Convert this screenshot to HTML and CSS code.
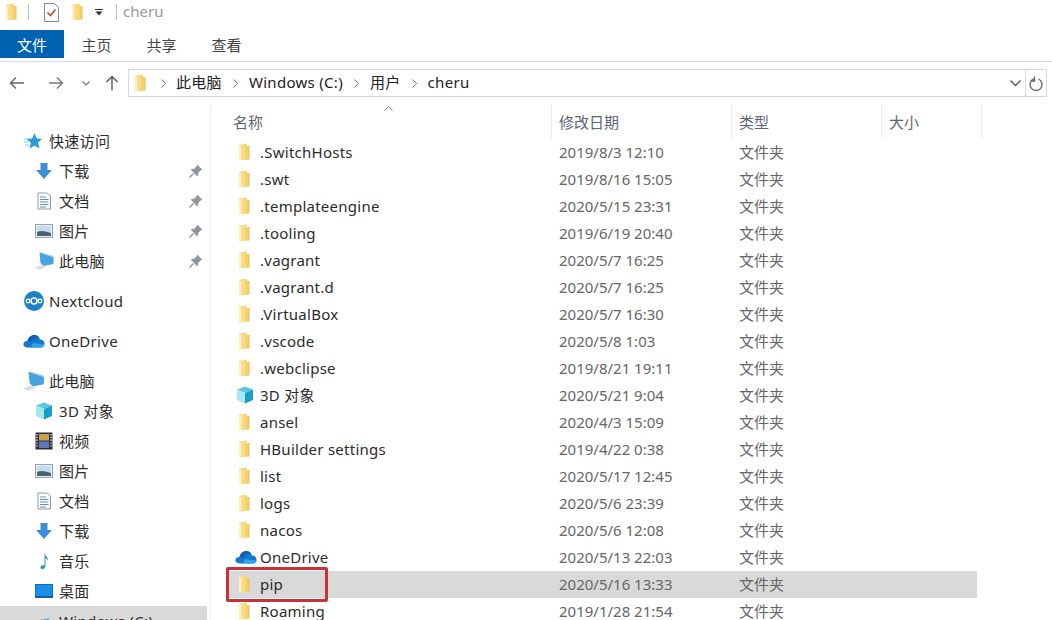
FILE: index.html
```html
<!DOCTYPE html>
<html>

<head>
    <title>cheru</title>
    <link rel="stylesheet" href="styles.css">
</head>

<body>
    <svg class="defs" width="0" height="0">
        <defs>
            <linearGradient id="fold" x1="0" y1="0" x2="1" y2="0">
                <stop offset="0" stop-color="#fbe6a4"/>
                <stop offset="0.6" stop-color="#f8d677"/>
                <stop offset="1" stop-color="#efc25a"/>
            </linearGradient>
            <symbol id="i-folder" viewBox="0 0 12 18">
                <path d="M1 1.5 L8.5 0.5 L9 3 L11.5 3 L11.5 16.5 L1 17.5 Z" fill="url(#fold)"/>
                <path d="M1 3.5 L3 3.5 L3 17.3 L1 17.5 Z" fill="#fff1c4"/>
            </symbol>
            <symbol id="i-down" viewBox="0 0 18 18">
                <path d="M5.5 1 H12.5 V8 H17 L9 17 L1 8 H5.5 Z" fill="#3f8fd8"/>
            </symbol>
            <symbol id="i-doc" viewBox="0 0 18 18">
                <path d="M3 1 H12 L15.5 4 V17 H3 Z" fill="#fff" stroke="#8b99a6"/>
                <path d="M5 5 H11 M5 7.5 H13.5 M5 10 H13.5 M5 12.5 H13.5 M5 15 H11" stroke="#5c8fb0" stroke-width="1"/>
            </symbol>
            <symbol id="i-pic" viewBox="0 0 18 18">
                <rect x="0.5" y="2.5" width="17" height="13" fill="#e8f0f5" stroke="#8fa5b3"/>
                <rect x="2" y="4" width="14" height="10" fill="#c5dcec"/>
                <path d="M2 10 C6 8 10 9 16 11 V14 H2 Z" fill="#4a6272"/>
            </symbol>
            <symbol id="i-pc" viewBox="0 0 20 18">
                <path d="M5 0.5 L19 5 V12 L9 14 L6 11 Z" fill="#4aa3de"/>
                <path d="M5 0.5 L7 0.5 L19 4 V5.5 Z" fill="#9bd2f2"/>
                <path d="M0 15.5 L7 13 L12 15 L5 18 Z" fill="#dcdfe1"/>
            </symbol>
            <symbol id="i-pin" viewBox="0 0 12 12">
                <path d="M7 0.5 L11.5 5 L10 5.5 L8 7.5 L7.8 10 L6.8 10.2 L1.8 5.2 L2 4.2 L4.5 4 L6.5 2 Z" fill="#8f979e"/>
                <path d="M3.8 8.2 L0.5 11.5" stroke="#8f979e" stroke-width="1.2"/>
            </symbol>
            <symbol id="i-cloud" viewBox="0 0 22 14">
                <path d="M5 13.5 C1.5 13.5 0 11.5 0.5 9.5 C1 7.5 3 6.8 4.5 7 C5.5 3 8.5 0.8 11.5 1 C14.5 1.2 16.5 3 17 5.5 C20 5.5 22 8 21.5 10.5 C21 12.5 19.5 13.5 18 13.5 Z" fill="#1577d0"/>
                <path d="M4.5 7 C5.5 3 8.5 0.8 11.5 1 C13.5 1.2 15 2 16 3.5 C12 3.5 9 6 8 8 C7 7.2 5.8 7 4.5 7 Z" fill="#0d5fb8"/>
                <path d="M8 13.5 L18 13.5 C19.5 13.5 21 12.5 21.5 10.5 L10 9 Z" fill="#2ea3ee"/>
            </symbol>
            <symbol id="i-cube" viewBox="0 0 18 18">
                <path d="M9 0.5 L17 3.5 L9 7 L1 3.5 Z" fill="#5cc8e0"/>
                <path d="M1 3.5 L9 7 V17.5 L1 14 Z" fill="#a5e8ee"/>
                <path d="M9 7 L17 3.5 V14 L9 17.5 Z" fill="#1a9cc8"/>
            </symbol>
            <symbol id="i-film" viewBox="0 0 18 18">
                <rect x="0.5" y="0.5" width="17" height="17" fill="#2b2f3a"/>
                <rect x="4" y="2" width="10" height="6.5" fill="#c9a24a"/>
                <rect x="4" y="9.5" width="10" height="6.5" fill="#5f78b8"/>
                <path d="M2 2 V16 M16 2 V16" stroke="#d8dde2" stroke-width="1.4" stroke-dasharray="1.4 1.4"/>
            </symbol>
            <symbol id="i-note" viewBox="0 0 18 18">
                <path d="M9.5 1 C10 4 13.5 5 13 9 C12.5 7.5 11.5 6.5 10.5 6.3 V14 C10.5 16 8.5 17.5 6.8 17 C5 16.5 5 14.5 6.3 13.7 C7.3 13 8.5 13 9.5 13.5 Z" fill="#2b93c9"/>
            </symbol>
            <symbol id="i-desk" viewBox="0 0 18 18">
                <rect x="0.5" y="2.5" width="17" height="13" fill="#1b8fe8" stroke="#0f6cc4"/>
                <rect x="0.5" y="14" width="17" height="1.5" fill="#0f5da8"/>
            </symbol>
            <symbol id="i-win" viewBox="0 0 18 18">
                <path d="M4 8 L8 7 V11 H4 Z M9 7 L14 6 V11 H9 Z M4 12 H8 V16 L4 15 Z M9 12 H14 V17 L9 16 Z" fill="#4fb6e8"/>
            </symbol>
        </defs>
    </svg>

    <div class="titlebar">
        <svg class="tfolder"><use href="#i-folder"/></svg>
        <span class="tsep tsep-a"></span>
        <svg class="tcheck" viewBox="0 0 15 19">
            <path d="M0.5 0.5 H10.5 L14.5 4.5 V18.5 H0.5 Z" fill="#fdfdfd" stroke="#8a8a8a"/>
            <path d="M3.5 9.5 L6.5 12.5 L11.5 6.5" fill="none" stroke="#c8492c" stroke-width="1.6"/>
        </svg>
        <svg class="tfolder tfolder-b"><use href="#i-folder"/></svg>
        <svg class="tdrop" viewBox="0 0 8 7">
            <path d="M0 0.5 H8" stroke="#333"/>
            <path d="M0.5 2.5 H7.5 L4 6.5 Z" fill="#333"/>
        </svg>
        <span class="tsep tsep-b"></span>
        <span class="ttext">cheru</span>
    </div>

    <div class="tabs">
        <span class="tab tab-file">文件</span>
        <span class="tab">主页</span>
        <span class="tab">共享</span>
        <span class="tab">查看</span>
    </div>

    <div class="navrow">
        <div class="navbtns">
            <svg class="nav-arrow back" viewBox="0 0 16 14"><path d="M15 7 H1.5 M7 1.5 L1.5 7 L7 12.5" fill="none" stroke="#666" stroke-width="1.4"/></svg>
            <svg class="nav-arrow fwd" viewBox="0 0 16 14"><path d="M1 7 H14.5 M9 1.5 L14.5 7 L9 12.5" fill="none" stroke="#777" stroke-width="1.4"/></svg>
            <svg class="nav-chev" viewBox="0 0 8 5"><path d="M0.5 0.5 L4 4 L7.5 0.5" fill="none" stroke="#777" stroke-width="1.2"/></svg>
            <svg class="nav-up" viewBox="0 0 14 16"><path d="M7 15.5 V1.5 M1.5 7 L7 1.5 L12.5 7" fill="none" stroke="#555" stroke-width="1.4"/></svg>
        </div>
        <div class="addr">
            <svg class="afolder"><use href="#i-folder"/></svg>
            <svg class="crumb-sep first" viewBox="0 0 5 9"><path d="M0.5 0.5 L4.5 4.5 L0.5 8.5" fill="none" stroke="#777"/></svg>
            <span class="crumb">此电脑</span>
            <svg class="crumb-sep" viewBox="0 0 5 9"><path d="M0.5 0.5 L4.5 4.5 L0.5 8.5" fill="none" stroke="#777"/></svg>
            <span class="crumb">Windows (C:)</span>
            <svg class="crumb-sep" viewBox="0 0 5 9"><path d="M0.5 0.5 L4.5 4.5 L0.5 8.5" fill="none" stroke="#777"/></svg>
            <span class="crumb">用户</span>
            <svg class="crumb-sep" viewBox="0 0 5 9"><path d="M0.5 0.5 L4.5 4.5 L0.5 8.5" fill="none" stroke="#777"/></svg>
            <span class="crumb">cheru</span>
            <svg class="addr-chev" viewBox="0 0 11 7"><path d="M0.5 0.5 L5.5 5.5 L10.5 0.5" fill="none" stroke="#555" stroke-width="1.4"/></svg>
            <span class="addr-refresh">
                <svg viewBox="0 0 14 15"><path d="M5 2.3 A6 6 0 1 0 9.5 2.5 M5.5 0 V4.5 H1.5" fill="none" stroke="#666" stroke-width="1.3" transform="translate(0 0.5)"/></svg>
            </span>
        </div>
    </div>

    <div class="main">
        <div class="side">
            <div class="si top"><svg class="sic" viewBox="0 0 22 22"><path d="M11.5 3 L13.7 8.5 L19 9 L15 12.7 L16.5 18.5 L11.5 15.4 L6.5 18.5 L7.9 12.7 L3.5 9 L9.2 8.5 Z" fill="#2a9bd6"/><path d="M1 9 H5 M1 12 H6 M2 15 H6" stroke="#7fcbed"/></svg>快速访问</div>
            <div class="si sub"><svg class="sic"><use href="#i-down"/></svg>下载<svg class="pin"><use href="#i-pin"/></svg></div>
            <div class="si sub"><svg class="sic"><use href="#i-doc"/></svg>文档<svg class="pin"><use href="#i-pin"/></svg></div>
            <div class="si sub"><svg class="sic"><use href="#i-pic"/></svg>图片<svg class="pin"><use href="#i-pin"/></svg></div>
            <div class="si sub"><svg class="sic sic-pc"><use href="#i-pc"/></svg>此电脑<svg class="pin"><use href="#i-pin"/></svg></div>
            <div class="si top gap"><svg class="sic" viewBox="0 0 22 22"><circle cx="11" cy="11" r="10" fill="#1b82c5"/><circle cx="11" cy="11" r="3" fill="none" stroke="#fff" stroke-width="1.5"/><circle cx="5" cy="11" r="1.8" fill="none" stroke="#fff" stroke-width="1.2"/><circle cx="17" cy="11" r="1.8" fill="none" stroke="#fff" stroke-width="1.2"/></svg>Nextcloud</div>
            <div class="si top gap"><svg class="sic sic-cloud"><use href="#i-cloud"/></svg>OneDrive</div>
            <div class="si top gap"><svg class="sic"><use href="#i-pc"/></svg>此电脑</div>
            <div class="si sub"><svg class="sic"><use href="#i-cube"/></svg>3D 对象</div>
            <div class="si sub"><svg class="sic"><use href="#i-film"/></svg>视频</div>
            <div class="si sub"><svg class="sic"><use href="#i-pic"/></svg>图片</div>
            <div class="si sub"><svg class="sic"><use href="#i-doc"/></svg>文档</div>
            <div class="si sub"><svg class="sic"><use href="#i-down"/></svg>下载</div>
            <div class="si sub"><svg class="sic"><use href="#i-note"/></svg>音乐</div>
            <div class="si sub"><svg class="sic"><use href="#i-desk"/></svg>桌面</div>
            <div class="si sub cur"><svg class="sic"><use href="#i-win"/></svg>Windows (C:)</div>
        </div>

        <div class="list">
            <div class="head">
                <svg class="sort" viewBox="0 0 9 5"><path d="M0.5 4.5 L4.5 0.5 L8.5 4.5" fill="none" stroke="#888"/></svg>
                <span class="hc c-name">名称</span>
                <span class="hc c-date">修改日期</span>
                <span class="hc c-type">类型</span>
                <span class="hc c-size">大小</span>
            </div>
            <div class="rows">
                <div class="row"><span class="nm"><svg class="fi"><use href="#i-folder"/></svg>.SwitchHosts</span><span class="dt">2019/8/3 12:10</span><span class="ty">文件夹</span></div>
                <div class="row"><span class="nm"><svg class="fi"><use href="#i-folder"/></svg>.swt</span><span class="dt">2019/8/16 15:05</span><span class="ty">文件夹</span></div>
                <div class="row"><span class="nm"><svg class="fi"><use href="#i-folder"/></svg>.templateengine</span><span class="dt">2020/5/15 23:31</span><span class="ty">文件夹</span></div>
                <div class="row"><span class="nm"><svg class="fi"><use href="#i-folder"/></svg>.tooling</span><span class="dt">2019/6/19 20:40</span><span class="ty">文件夹</span></div>
                <div class="row"><span class="nm"><svg class="fi"><use href="#i-folder"/></svg>.vagrant</span><span class="dt">2020/5/7 16:25</span><span class="ty">文件夹</span></div>
                <div class="row"><span class="nm"><svg class="fi"><use href="#i-folder"/></svg>.vagrant.d</span><span class="dt">2020/5/7 16:25</span><span class="ty">文件夹</span></div>
                <div class="row"><span class="nm"><svg class="fi"><use href="#i-folder"/></svg>.VirtualBox</span><span class="dt">2020/5/7 16:30</span><span class="ty">文件夹</span></div>
                <div class="row"><span class="nm"><svg class="fi"><use href="#i-folder"/></svg>.vscode</span><span class="dt">2020/5/8 1:03</span><span class="ty">文件夹</span></div>
                <div class="row"><span class="nm"><svg class="fi"><use href="#i-folder"/></svg>.webclipse</span><span class="dt">2019/8/21 19:11</span><span class="ty">文件夹</span></div>
                <div class="row"><span class="nm"><svg class="fi fi-wide"><use href="#i-cube"/></svg>3D 对象</span><span class="dt">2020/5/21 9:04</span><span class="ty">文件夹</span></div>
                <div class="row"><span class="nm"><svg class="fi"><use href="#i-folder"/></svg>ansel</span><span class="dt">2020/4/3 15:09</span><span class="ty">文件夹</span></div>
                <div class="row"><span class="nm"><svg class="fi"><use href="#i-folder"/></svg>HBuilder settings</span><span class="dt">2019/4/22 0:38</span><span class="ty">文件夹</span></div>
                <div class="row"><span class="nm"><svg class="fi"><use href="#i-folder"/></svg>list</span><span class="dt">2020/5/17 12:45</span><span class="ty">文件夹</span></div>
                <div class="row"><span class="nm"><svg class="fi"><use href="#i-folder"/></svg>logs</span><span class="dt">2020/5/6 23:39</span><span class="ty">文件夹</span></div>
                <div class="row"><span class="nm"><svg class="fi"><use href="#i-folder"/></svg>nacos</span><span class="dt">2020/5/6 12:08</span><span class="ty">文件夹</span></div>
                <div class="row"><span class="nm"><svg class="fi fi-cloud"><use href="#i-cloud"/></svg>OneDrive</span><span class="dt">2020/5/13 22:03</span><span class="ty">文件夹</span></div>
                <div class="row sel"><span class="nm"><svg class="fi"><use href="#i-folder"/></svg>pip</span><span class="dt">2020/5/16 13:33</span><span class="ty">文件夹</span><span class="mark"></span></div>
                <div class="row"><span class="nm"><svg class="fi"><use href="#i-folder"/></svg>Roaming</span><span class="dt">2019/1/28 21:54</span><span class="ty">文件夹</span></div>
            </div>
        </div>
    </div>
</body>
</html>
```

FILE: styles.css
```css
html, body {
    margin: 0;
    height: 620px;
    overflow: hidden;
    background: #fff;
}

body {
    font: normal 15px/20px "Noto Sans", "Noto Sans CJK SC", sans-serif;
    color: #2b2b2b;
}

.defs {
    display: block;
    height: 0;
}

/* title bar */
.titlebar {
    display: flex;
    align-items: center;
    height: 24px;
    padding-left: 5px;
}

.tfolder {
    width: 12px;
    height: 18px;
}

.tfolder-b {
    margin-left: 12px;
}

.tsep {
    width: 1px;
    height: 16px;
    background: #bdbdbd;
}

.tsep-a {
    margin-left: 11px;
}

.tsep-b {
    margin-left: 13px;
}

.tcheck {
    width: 15px;
    height: 19px;
    margin-left: 15px;
}

.tdrop {
    width: 8px;
    height: 7px;
    margin-left: 12px;
}

.ttext {
    margin-left: 6px;
    padding-bottom: 2px;
    color: #9a9a9a;
}

/* ribbon tabs */
.tabs {
    display: flex;
    height: 31px;
    margin-top: 6px;
    border-bottom: 1px solid #dcdcdc;
}

.tab {
    height: 28px;
    line-height: 30px;
    padding: 0 17.5px;
    color: #444;
}

.tab-file {
    width: 30px;
    padding: 0 17px;
    background: #0063b1;
    color: #fff;
}

/* nav row */
.navrow {
    display: flex;
    align-items: center;
    height: 28px;
    margin-top: 7px;
}

.navbtns {
    display: flex;
    align-items: center;
    width: 128px;
}

.nav-arrow {
    width: 16px;
    height: 14px;
}

.back {
    margin-left: 9px;
}

.fwd {
    margin-left: 23px;
}

.nav-chev {
    width: 8px;
    height: 5px;
    margin-left: 18px;
}

.nav-up {
    width: 14px;
    height: 16px;
    margin-left: 15px;
}

.addr {
    display: flex;
    align-items: center;
    box-sizing: border-box;
    width: 919px;
    height: 28px;
    border: 1px solid #d9d9d9;
    padding-left: 5px;
}

.afolder {
    width: 12px;
    height: 18px;
}

.crumb-sep {
    width: 5px;
    height: 9px;
    margin: 0 11px;
}

.crumb-sep.first {
    margin-left: 15px;
    margin-right: 10px;
}

.crumb {
    padding-bottom: 2px;
    letter-spacing: 0.3px;
    color: #222;
}

.addr-chev {
    width: 11px;
    height: 7px;
    margin-left: auto;
    margin-right: 4px;
}

.addr-refresh {
    display: flex;
    align-items: center;
    justify-content: center;
    width: 20px;
    height: 100%;
    border-left: 1px solid #d9d9d9;
}

.addr-refresh svg {
    width: 14px;
    height: 15px;
}

/* main area */
.main {
    display: flex;
    margin-top: 8px;
}

.side {
    box-sizing: border-box;
    width: 211px;
    height: 520px;
    padding-top: 21px;
    border-right: 1px solid #f0f0f0;
}

.si {
    display: flex;
    align-items: center;
    height: 30px;
    margin-right: 3px;
    letter-spacing: 0.3px;
    white-space: nowrap;
}

.top {
    padding-left: 23px;
}

.sub {
    padding-left: 35px;
}

.gap {
    margin-top: 10px;
}

.sic {
    flex: none;
    width: 18px;
    height: 18px;
    margin-right: 6px;
}

.sic-pc {
    width: 21px;
    margin-left: -1px;
    margin-right: 4px;
}

.top .sic {
    width: 22px;
    height: 22px;
    margin-right: 4px;
}

.top .sic-cloud {
    height: 14px;
}

.pin {
    width: 14px;
    height: 14px;
    margin-left: auto;
    margin-right: 4px;
}

.cur {
    background: #d9d9d9;
}

.list {
    flex: 1;
    min-width: 0;
}

.head {
    position: relative;
    display: flex;
    height: 34px;
    align-items: flex-start;
}

.sort {
    position: absolute;
    left: 173px;
    top: 1px;
    width: 9px;
    height: 5px;
}

.hc {
    box-sizing: border-box;
    height: 33px;
    line-height: 35px;
    padding-left: 7px;
    border-right: 1px solid #ececec;
    color: #5c6670;
}

.c-name {
    width: 341px;
    padding-left: 22px;
}

.c-date {
    width: 180px;
}

.c-type {
    width: 150px;
}

.c-size {
    width: 100px;
}

.row {
    position: relative;
    display: flex;
    align-items: center;
    box-sizing: border-box;
    width: 748px;
    height: 27px;
    padding-bottom: 2px;
    margin-left: 18px;
    white-space: nowrap;
}

.nm {
    display: flex;
    align-items: center;
    box-sizing: border-box;
    width: 330px;
    padding-left: 9px;
    letter-spacing: 0.25px;
    color: #2b2b2b;
}

.fi {
    flex: none;
    width: 12px;
    height: 18px;
    margin-right: 10px;
}

.fi-wide {
    width: 18px;
    margin-left: -2px;
    margin-right: 6px;
}

.fi-cloud {
    width: 22px;
    height: 14px;
    margin-left: -3px;
    margin-right: 3px;
}

.dt {
    width: 180px;
    color: #666;
}

.ty {
    color: #666;
}

.sel {
    background: #d9d9d9;
}

.mark {
    position: absolute;
    left: -3px;
    top: -4px;
    box-sizing: border-box;
    width: 102px;
    height: 35px;
    border: 3px solid #c8303a;
    border-radius: 2px;
}
```
